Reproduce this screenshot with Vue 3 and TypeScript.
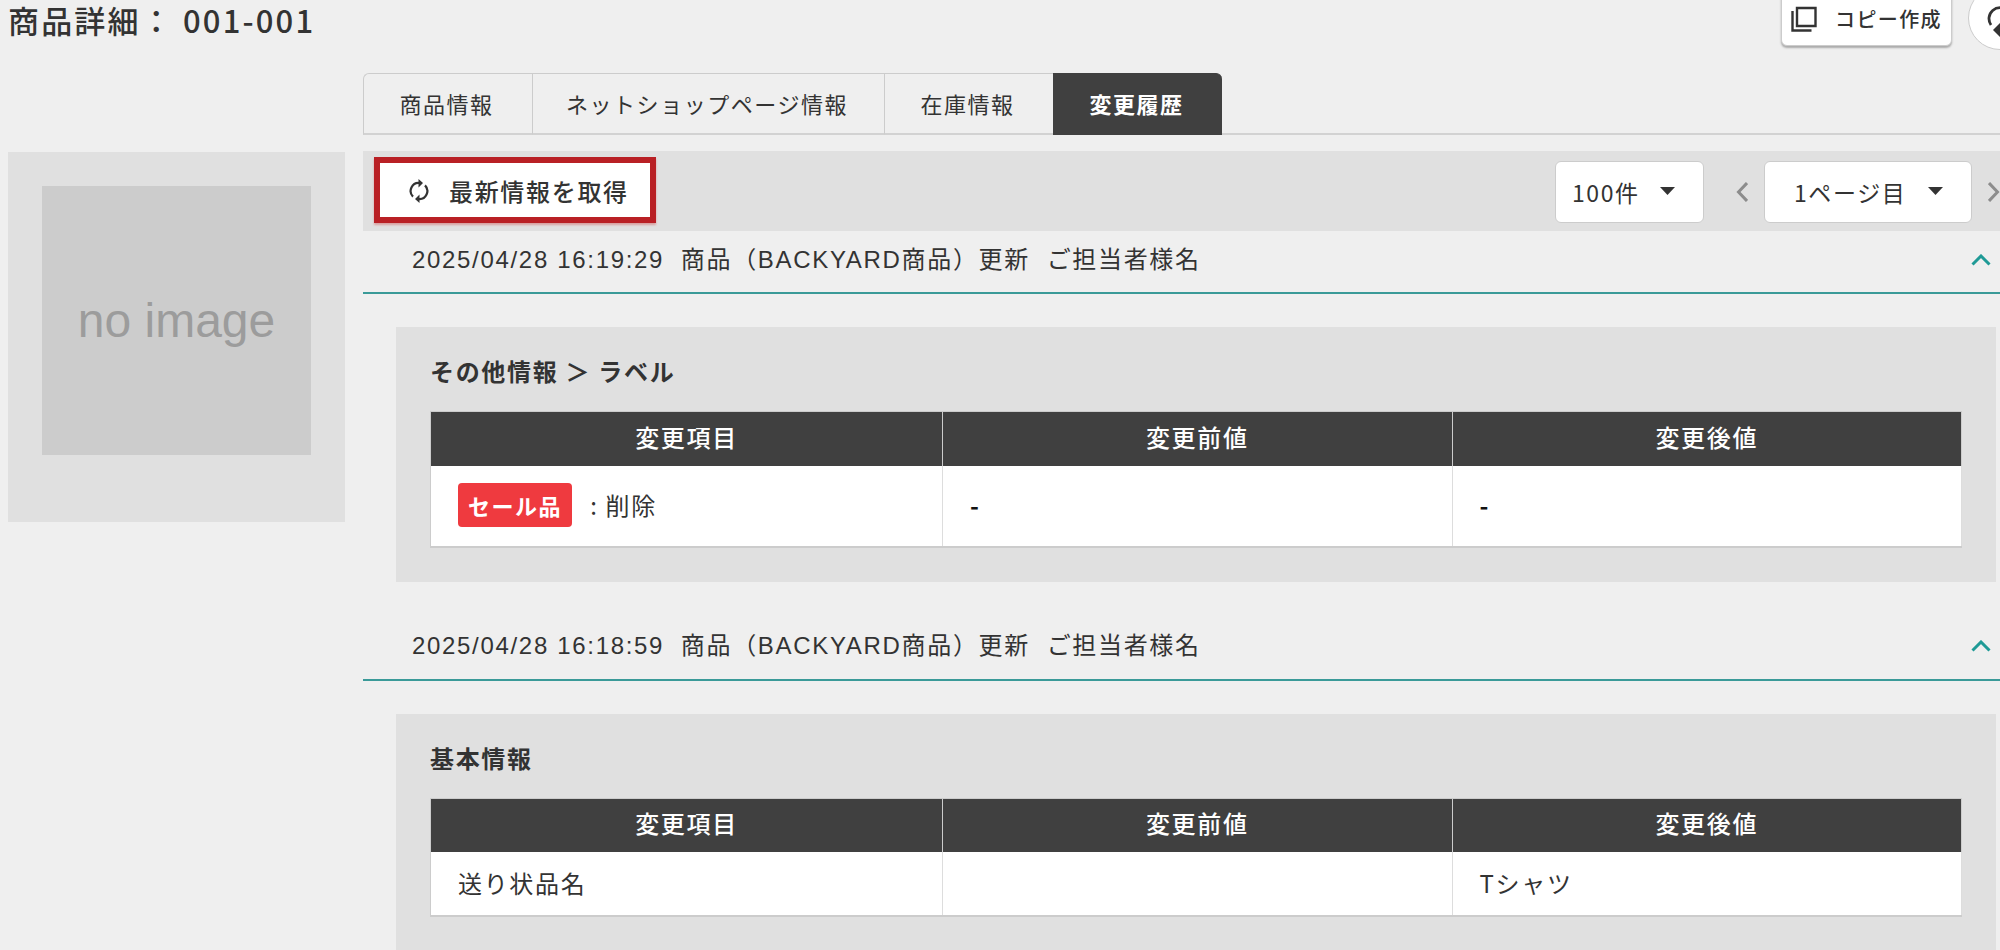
<script setup lang="ts">
import { ref } from 'vue'

interface ChangeRow {
  label?: string
  item: string
  before: string
  after: string
}

interface HistoryEntry {
  id: number
  title: string
  section: string
  rows: ChangeRow[]
}

const tabs: string[] = ['商品情報', 'ネットショップページ情報', '在庫情報', '変更履歴']
const activeTab = ref<string>('変更履歴')
const perPage = ref<string>('100件')
const page = ref<string>('1ページ目')
const openIds = ref<number[]>([1, 2])

const columns: string[] = ['変更項目', '変更前値', '変更後値']

const entries: HistoryEntry[] = [
  {
    id: 1,
    title: '2025/04/28 16:19:29\u00a0 商品（BACKYARD商品）更新\u00a0 ご担当者様名',
    section: 'その他情報 ＞ ラベル',
    rows: [{ label: 'セール品', item: ': 削除', before: '-', after: '-' }],
  },
  {
    id: 2,
    title: '2025/04/28 16:18:59\u00a0 商品（BACKYARD商品）更新\u00a0 ご担当者様名',
    section: '基本情報',
    rows: [{ item: '送り状品名', before: '', after: 'Tシャツ' }],
  },
]

function toggle(id: number): void {
  openIds.value = openIds.value.includes(id)
    ? openIds.value.filter((n) => n !== id)
    : [...openIds.value, id]
}
</script>

<template>
  <div class="page">
    <header class="header">
      <h1 class="title">商品詳細： 001-001</h1>
      <div class="actions">
        <button type="button" class="copy">
          <svg class="copy-icon" viewBox="0 0 26 26" aria-hidden="true">
            <path d="M6 2H24.5V20H6Z M1.5 5V24.5H20.5" fill="none" stroke="currentColor" stroke-width="2.4" />
          </svg>
          コピー作成
        </button>
        <button type="button" class="round" aria-label="再読み込み">
          <svg class="round-icon" viewBox="0 0 26 26" aria-hidden="true">
            <path d="M4 20A11 11 0 1 1 22 20" fill="none" stroke="currentColor" stroke-width="2.8" />
            <path d="M13 18L20 25L13 32L6 25Z" fill="currentColor" />
          </svg>
        </button>
      </div>
    </header>

    <div class="columns">
      <aside class="image-card">
        <div class="no-image">no image</div>
      </aside>

      <main class="main">
        <nav class="tabs">
          <button
            v-for="tab in tabs"
            :key="tab"
            type="button"
            class="tab"
            :class="{ active: tab === activeTab }"
            @click="activeTab = tab"
          >
            {{ tab }}
          </button>
        </nav>

        <div class="toolbar">
          <button type="button" class="refresh">
            <svg class="refresh-icon" viewBox="0 0 20 24" aria-hidden="true">
              <path
                d="M10.5 4A8 8 0 0 0 4 17.6 M9.5 20A8 8 0 0 0 16 6.4"
                fill="none"
                stroke="currentColor"
                stroke-width="2.2"
              />
              <path d="M9.5 0L14 4L9.5 8.4Z M10.5 24L6 20L10.5 15.6Z" fill="currentColor" />
            </svg>
            最新情報を取得
          </button>
          <div class="pager">
            <div class="select-box count">
              <select v-model="perPage" aria-label="表示件数">
                <option>100件</option>
              </select>
              <svg class="caret" viewBox="0 0 15 8" aria-hidden="true"><path d="M0 0H15L7.5 8Z" fill="currentColor" /></svg>
            </div>
            <button type="button" class="step" aria-label="前のページ">
              <svg viewBox="0 0 12 20" aria-hidden="true">
                <path d="M11 1L2.5 10L11 19" fill="none" stroke="currentColor" stroke-width="3" />
              </svg>
            </button>
            <div class="select-box page-no">
              <select v-model="page" aria-label="ページ">
                <option>1ページ目</option>
              </select>
              <svg class="caret" viewBox="0 0 15 8" aria-hidden="true"><path d="M0 0H15L7.5 8Z" fill="currentColor" /></svg>
            </div>
            <button type="button" class="step" aria-label="次のページ">
              <svg viewBox="0 0 12 20" aria-hidden="true">
                <path d="M1 1L9.5 10L1 19" fill="none" stroke="currentColor" stroke-width="3" />
              </svg>
            </button>
          </div>
        </div>

        <section v-for="entry in entries" :key="entry.id" class="entry">
          <button
            type="button"
            class="entry-head"
            :aria-expanded="openIds.includes(entry.id)"
            @click="toggle(entry.id)"
          >
            <span>{{ entry.title }}</span>
            <svg class="chevron" viewBox="0 0 20 12" aria-hidden="true">
              <path d="M1.5 10.5L10 2L18.5 10.5" fill="none" stroke="currentColor" stroke-width="3" />
            </svg>
          </button>
          <div v-if="openIds.includes(entry.id)" class="panel">
            <h2 class="section-title">{{ entry.section }}</h2>
            <table class="changes">
              <thead>
                <tr>
                  <th v-for="column in columns" :key="column" scope="col">{{ column }}</th>
                </tr>
              </thead>
              <tbody>
                <tr v-for="row in entry.rows" :key="row.item" :class="{ labeled: row.label }">
                  <td>
                    <span v-if="row.label" class="badge">{{ row.label }}</span>
                    <span>{{ row.item }}</span>
                  </td>
                  <td :class="{ none: row.before === '-' }">{{ row.before }}</td>
                  <td :class="{ none: row.after === '-' }">{{ row.after }}</td>
                </tr>
              </tbody>
            </table>
          </div>
        </section>
      </main>
    </div>
  </div>
</template>

<style>
html,
body {
  background: #efefef;
  overflow: hidden;
}
</style>

<style scoped>
* {
  box-sizing: border-box;
  letter-spacing: 0.07em;
}

.page {
  color: #333;
  font-family: 'Noto Sans CJK JP', sans-serif;
  font-size: 24px;
  line-height: 36px;
}

button,
select {
  font: inherit;
  color: inherit;
  cursor: pointer;
}

.header {
  display: flex;
  justify-content: space-between;
  align-items: flex-start;
  height: 73px;
  padding-left: 8px;
}

.title {
  margin: 0;
  font-size: 31px;
  font-weight: 500;
  line-height: 40px;
}

.actions {
  display: flex;
  gap: 16px;
  margin: -14px -32px 0 0;
}

.copy {
  display: flex;
  align-items: center;
  gap: 18px;
  height: 60px;
  padding: 6px 9px 0;
  border: 1px solid #ccc;
  border-radius: 6px;
  background: #fff;
  box-shadow: 0 2px 2px #aaa;
  font-size: 20px;
  font-weight: 500;
}

.copy-icon {
  width: 26px;
  height: 26px;
}

.round {
  display: flex;
  align-items: center;
  justify-content: center;
  width: 64px;
  height: 64px;
  padding: 0;
  border: 1px solid #ccc;
  border-radius: 50%;
  background: #fff;
}

.round-icon {
  width: 26px;
  height: 26px;
  overflow: visible;
}

.columns {
  display: flex;
  align-items: flex-start;
  gap: 18px;
  padding-left: 8px;
}

.image-card {
  flex: none;
  width: 337px;
  height: 370px;
  margin-top: 79px;
  padding: 34px;
  background: #e0e0e0;
}

.no-image {
  display: flex;
  align-items: center;
  justify-content: center;
  aspect-ratio: 1;
  background: #ccc;
  color: #9c9c9c;
  font-family: 'Liberation Sans', sans-serif;
  font-size: 48px;
  letter-spacing: normal;
}

.main {
  flex: 1;
  min-width: 0;
}

.tabs {
  display: flex;
  height: 62px;
  margin-bottom: 16px;
  border-bottom: 2px solid #d2d2d2;
}

.tab {
  min-width: 169px;
  height: 62px;
  padding: 0 36px 2px 33px;
  border: 1px solid #ccc;
  border-right: 0;
  border-bottom: 2px solid #d2d2d2;
  background: #efefef;
  font-size: 22px;
}

.tab:first-child {
  border-top-left-radius: 6px;
}

.tab:last-child {
  border-top-right-radius: 6px;
}

.tab.active {
  border-color: #404040;
  background: #404040;
  color: #fff;
  font-weight: 700;
}

.toolbar {
  display: flex;
  justify-content: space-between;
  align-items: flex-start;
  height: 80px;
  padding: 6px 0 0 11px;
  background: #e0e0e0;
}

.refresh {
  display: flex;
  align-items: center;
  gap: 20px;
  height: 66px;
  padding: 2px 21px 0 29px;
  border: 6px solid #b92025;
  background: #fff;
  box-shadow: 0 2px 2px #d9a0a0;
  font-weight: 500;
}

.refresh-icon {
  width: 20px;
  height: 24px;
}

.pager {
  display: flex;
  align-items: center;
  padding-top: 4px;
}

.select-box {
  position: relative;
  height: 62px;
}

.select-box select {
  width: 100%;
  height: 100%;
  border: 1px solid #ccc;
  border-radius: 6px;
  background: #fff;
  font-size: 23px;
  appearance: none;
}

.count {
  width: 149px;
}

.count select {
  padding: 0 16px;
}

.page-no {
  width: 208px;
}

.page-no select {
  padding: 0 29px;
}

.caret {
  position: absolute;
  top: 26px;
  right: 29px;
  width: 15px;
  height: 8px;
  pointer-events: none;
}

.step {
  display: flex;
  justify-content: flex-end;
  width: 44px;
  padding: 0;
  border: 0;
  background: none;
  color: #8c8c8c;
}

.step svg {
  width: 12px;
  height: 20px;
}

.count + .step {
  width: 60px;
  padding-right: 16px;
}

.page-no + .step {
  width: 28px;
}

.entry-head {
  display: flex;
  justify-content: space-between;
  align-items: center;
  width: 100%;
  height: 63px;
  padding: 0 9px 4px 49px;
  border: 0;
  border-bottom: 2px solid #3a9a98;
  background: none;
  font-family: 'Liberation Sans', 'Noto Sans CJK JP', sans-serif;
  text-align: left;
}

.chevron {
  width: 20px;
  height: 12px;
  color: #1f9a96;
}

.panel {
  margin: 33px 4px 36px 33px;
  padding: 26px 34px 34px;
  background: #e0e0e0;
}

.section-title {
  margin: 0 0 22px;
  font-size: 24px;
  font-weight: 700;
  line-height: 36px;
}

.changes {
  width: 100%;
  table-layout: fixed;
  border-collapse: collapse;
  background: #fff;
  border: 1px solid #ccc;
  border-bottom: 2px solid #ccc;
}

.changes th {
  height: 54px;
  padding: 0 0 4px;
  border-right: 1px solid #ccc;
  background: #404040;
  color: #fff;
  font-weight: 500;
}

.changes th:first-child {
  width: 512px;
}

.changes td {
  height: 64px;
  padding: 12px 27px 14px;
  border-right: 1px solid #ddd;
}

.changes .labeled td {
  height: 81px;
}

.badge {
  display: inline-block;
  margin-right: 18px;
  padding: 4px 10px;
  border-radius: 4px;
  background: #ef3a3f;
  color: #fff;
  font-size: 22px;
  font-weight: 700;
}

.none {
  color: #111;
  font-weight: 700;
}
</style>
